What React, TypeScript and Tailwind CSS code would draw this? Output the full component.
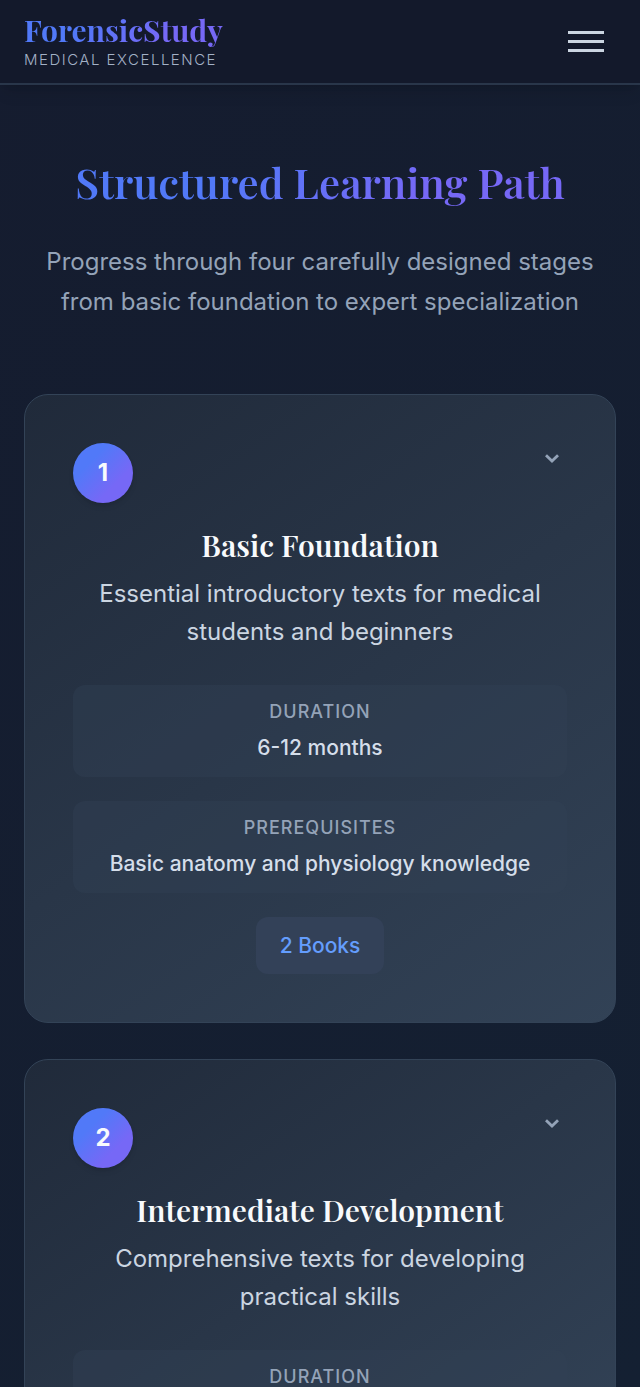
type Detail = { label: string; value?: string };
type Stage = { title: string; description: string; details: Detail[]; books?: string };

const stages: Stage[] = [
  {
    title: 'Basic Foundation',
    description: 'Essential introductory texts for medical students and beginners',
    details: [
      { label: 'Duration', value: '6-12 months' },
      { label: 'Prerequisites', value: 'Basic anatomy and physiology knowledge' },
    ],
    books: '2 Books',
  },
  {
    title: 'Intermediate Development',
    description: 'Comprehensive texts for developing practical skills',
    details: [{ label: 'Duration' }],
  },
];

const serif = "font-['Playfair_Display','Liberation_Serif',serif]";
const gradient = 'bg-linear-135/srgb from-[#5179f8] from-30% to-[#7668f6] to-70%';
const gradientText = `${gradient} bg-clip-text text-transparent`;

function Header() {
  return (
    <header className="flex shrink-0 items-center justify-between border-b-2 border-[#29364a] bg-[#13192b] px-6 py-3 shadow-lg shadow-black/10">
      <a href="#home" className="flex flex-col">
        <span className={`${serif} ${gradientText} text-[30px] leading-9 font-bold`}>ForensicStudy</span>
        <span className="text-[15px] leading-[23px] font-light tracking-[1.5px] text-[#a3b1c6] uppercase">
          Medical Excellence
        </span>
      </a>
      <button type="button" aria-label="Open menu" className="flex flex-col gap-[6px] p-3">
        <span className="h-[3px] w-9 bg-[#cbd5e1]" />
        <span className="h-[3px] w-9 bg-[#cbd5e1]" />
        <span className="h-[3px] w-9 bg-[#cbd5e1]" />
      </button>
    </header>
  );
}

function StageCard({ stage, number }: { stage: Stage; number: number }) {
  return (
    <article className="shrink-0 rounded-3xl border border-[#334357] bg-linear-[145deg] from-[#202a3a] to-[#324256] p-12">
      <div className="flex items-start justify-between">
        <div
          className={`${gradient} flex size-15 items-center justify-center rounded-full text-2xl font-bold text-slate-50 shadow-md shadow-black/10`}
        >
          {number}
        </div>
        <button type="button" aria-label={`Expand ${stage.title}`} className="flex size-[30px] items-center justify-center">
          <svg width="14" height="9" viewBox="0 0 14 9" fill="none" stroke="#94a3b8" strokeWidth="2.8" aria-hidden="true">
            <path d="M1 1.2 7 7 13 1.2" />
          </svg>
        </button>
      </div>
      <h2 className={`${serif} mt-6 text-center text-[30px] leading-9 font-semibold text-slate-50`}>{stage.title}</h2>
      <p className="mt-3 text-center text-2xl leading-[38px] text-[#cbd5e1]">{stage.description}</p>
      <dl className="mt-[34px] flex flex-col gap-6">
        {stage.details.map((detail) => (
          <div key={detail.label} className="rounded-xl bg-[#334155]/40 p-3 text-center">
            <dt className="text-lg leading-[30px] font-medium tracking-[1px] text-[#94a3b8] uppercase">{detail.label}</dt>
            {detail.value && (
              <dd className="mt-1 text-[21px] leading-[34px] font-medium text-[#d5deea]">{detail.value}</dd>
            )}
          </div>
        ))}
      </dl>
      {stage.books && (
        <div className="mt-6 flex justify-center">
          <span className="rounded-xl bg-[#334158] px-6 py-3 text-[21px] leading-[33px] font-medium text-[#649dfd]">
            {stage.books}
          </span>
        </div>
      )}
    </article>
  );
}

export default function App() {
  return (
    <div className="flex h-screen flex-col overflow-hidden bg-linear-135 from-[#151c2f] to-[#142032] font-['Inter',sans-serif]">
      <Header />
      <main className="flex flex-col px-6 pt-[71px]">
        <section className="text-center">
          <h1 className={`${serif} text-[42px] leading-[52px] font-semibold`}>
            <span className={gradientText}>Structured Learning Path</span>
          </h1>
          <p className="mx-auto mt-[34px] text-2xl leading-[40px] text-[#94a3b8]">
            Progress through four carefully designed stages from basic foundation to expert specialization
          </p>
        </section>
        <div className="mt-[72px] flex flex-col gap-9">
          {stages.map((stage, index) => (
            <StageCard key={stage.title} stage={stage} number={index + 1} />
          ))}
        </div>
      </main>
    </div>
  );
}
